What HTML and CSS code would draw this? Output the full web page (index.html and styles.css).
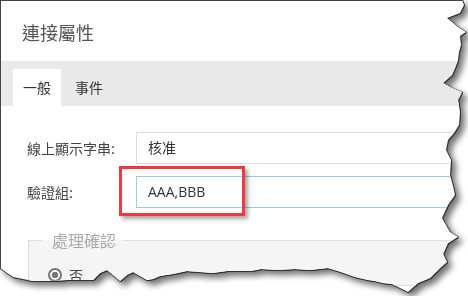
FILE: index.html
```html
<!DOCTYPE html>
<html lang="zh-Hant">
<head>
    <meta charset="UTF-8">
    <title>連接屬性</title>
    <link rel="stylesheet" href="styles.css">
</head>
<body>
    <div class="sheet">
        <div class="dialog">
            <div class="title">連接屬性</div>
            <div class="tabs">
                <span class="tab active">一般</span>
                <span class="tab">事件</span>
            </div>
            <div class="content">
                <div class="row">
                    <label>線上顯示字串:</label>
                    <div class="field">核准</div>
                </div>
                <div class="row">
                    <label>驗證組:</label>
                    <div class="field focus">AAA,BBB<span class="mark"></span></div>
                </div>
                <fieldset class="group">
                    <legend>處理確認</legend>
                    <div class="radio"><span class="dot"></span>否</div>
                </fieldset>
            </div>
        </div>
    </div>
</body>
</html>
```

FILE: styles.css
```css
html, body {
    margin: 0;
    padding: 0;
    background: #fff;
    overflow: hidden;
}
body {
    font-family: "Open Sans", "Noto Sans CJK TC", sans-serif;
    color: #444;
}
.sheet {
    width: 468px;
    height: 296px;
    filter: drop-shadow(1px 0 0 #333) drop-shadow(0 1px 0 #333) drop-shadow(4px 4px 3px rgba(0, 0, 0, 0.55));
}
.dialog {
    width: 468px;
    height: 296px;
    box-sizing: border-box;
    background: #fff;
    border-top: 1px solid #444;
    border-left: 1px solid #444;
    overflow: hidden;
    clip-path: polygon(0 0, 462px 0, 464px 5px, 460px 13px, 447px 18px, 452px 22px, 458px 27px, 466px 32px, 460px 36px, 461px 45px, 459px 52px, 458px 60px, 455px 68px, 452px 75px, 443px 83px, 452px 88px, 462px 92px, 458px 100px, 460px 112px, 459px 125px, 454px 133px, 448px 140px, 446px 150px, 451px 160px, 450px 175px, 453px 186px, 455px 195px, 448px 205px, 442px 218px, 450px 232px, 458px 237px, 448px 243px, 443px 254px, 447px 262px, 440px 268px, 430px 278px, 418px 283px, 408px 292px, 400px 288px, 392px 284px, 383px 283px, 375px 281px, 368px 280px, 355px 277px, 341px 272px, 328px 268px, 310px 270px, 295px 269px, 278px 270px, 261px 269px, 251px 271px, 240px 271px, 227px 271px, 213px 273px, 200px 272px, 187px 271px, 173px 274px, 160px 276px, 153px 279px, 147px 280px, 140px 276px, 133px 272px, 127px 275px, 120px 281px, 113px 275px, 107px 270px, 100px 273px, 93px 280px, 80px 280px, 67px 280px, 50px 281px, 33px 281px, 13px 277px, 3px 270px, 0 268px);
}
.title {
    height: 60px;
    box-sizing: border-box;
    padding: 19px 0 0 21px;
    font-size: 18px;
    line-height: 24px;
    color: #555;
    font-family: "Noto Sans CJK TC", sans-serif;
}
.tabs {
    height: 45px;
    box-sizing: border-box;
    background: #e9e9e9;
    padding: 8px 0 0 12px;
    display: flex;
    gap: 4px;
}
.tab {
    padding: 0 10px;
    font-size: 14px;
    line-height: 37px;
    color: #333;
    font-family: "Noto Sans CJK TC", sans-serif;
}
.tab.active {
    background: #fff;
}
.content {
    padding: 26px 0 0 26px;
}
.row {
    display: flex;
    align-items: center;
    margin-bottom: 12px;
}
.row label {
    width: 109px;
    font-size: 14px;
    font-family: "Noto Sans CJK TC", sans-serif;
}
.field {
    position: relative;
    flex: 1;
    height: 32px;
    box-sizing: border-box;
    border: 1px solid #ddd;
    border-right: none;
    padding-left: 11px;
    font-size: 14px;
    line-height: 30px;
    color: #333;
}
.field.focus {
    border-color: #9dc8ee;
}
.mark {
    position: absolute;
    left: -18px;
    top: -11px;
    width: 126px;
    height: 50px;
    box-sizing: border-box;
    border: 3px solid #ec3b3f;
    box-shadow: 3px 3px 4px rgba(0, 0, 0, 0.35);
}
.group {
    margin: 22px 0 0 1px;
    padding: 0 0 0 13px;
    border: 1px solid #ddd;
    border-right: none;
    background: #f5f5f5;
}
.group legend {
    padding: 0 7px 0 10px;
    font-size: 16px;
    line-height: 20px;
    color: #aaa;
    font-family: "Noto Sans CJK TC", sans-serif;
}
.radio {
    display: flex;
    align-items: center;
    gap: 7px;
    margin: 15px 0 0 6px;
    font-size: 14px;
    color: #444;
    font-family: "Noto Sans CJK TC", sans-serif;
}
.dot {
    width: 10px;
    height: 10px;
    border: 2px solid #777;
    border-radius: 50%;
    box-sizing: content-box;
    background: radial-gradient(circle, #777 0 3px, transparent 3.5px);
}
```
